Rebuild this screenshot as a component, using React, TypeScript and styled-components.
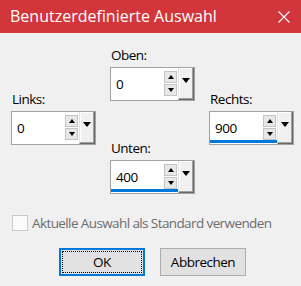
import React from "react";
import styled, { createGlobalStyle } from "styled-components";

const Global = createGlobalStyle`
  html, body { margin: 0; padding: 0; }
  body {
    width: 301px;
    height: 286px;
    overflow: hidden;
    background: #f0f0f0;
    font-family: "Open Sans", "Noto Sans", "Liberation Sans", sans-serif;
    font-size: 13.5px;
    letter-spacing: -0.5px;
    color: #000;
  }
`;

const Window = styled.div`
  width: 301px;
  height: 286px;
  display: flex;
  flex-direction: column;
  background: #f0f0f0;
`;

const TitleBar = styled.div`
  height: 33px;
  flex: none;
  background: #d2353a;
  color: #fff;
  display: flex;
  align-items: center;
  justify-content: space-between;
  padding: 0 11px 0 10px;
  box-sizing: border-box;
`;

const TitleText = styled.span`
  font-size: 16px;
  letter-spacing: 0;
  line-height: 20px;
  margin-top: -1px;
`;

const CloseIcon = styled.svg`
  width: 12px;
  height: 12px;
  display: block;
`;

const Fields = styled.div`
  display: flex;
  align-items: flex-start;
  gap: 14px;
  padding: 12px 0 0 11px;
`;

const Column = styled.div<{ $offset: number }>`
  width: 85px;
  display: flex;
  flex-direction: column;
  gap: 37px;
  padding-top: ${(p) => p.$offset}px;
`;

const Group = styled.div`
  display: flex;
  flex-direction: column;
`;

const Label = styled.label`
  font-size: 13.5px;
  line-height: 20px;
  height: 22px;
  padding-left: 1px;
  color: #000;
`;

const SpinBox = styled.div`
  height: 34px;
  box-sizing: border-box;
  border: 1px solid #a2a2a2;
  background: #fff;
  display: flex;
`;

const Main = styled.div`
  flex: 1;
  display: flex;
  flex-direction: column;
  min-width: 0;
`;

const FieldRow = styled.div`
  flex: 1;
  display: flex;
  align-items: flex-start;
`;

const Value = styled.span`
  flex: 1;
  padding: 6px 0 0 5px;
  line-height: 20px;
  font-size: 13.5px;
  color: #000;
`;

const Spinners = styled.div`
  width: 13px;
  margin: 3px 1px 0 0;
  display: flex;
  flex-direction: column;
  gap: 1px;
`;

const SpinButton = styled.div`
  height: 12px;
  box-sizing: border-box;
  border: 1px solid #c4c4c4;
  background: #e7e7e7;
  display: flex;
  align-items: center;
  justify-content: center;
`;

const Bar = styled.div<{ $active: boolean }>`
  height: 4px;
  margin-bottom: 1px;
  background: ${(p) => (p.$active ? "#0078d7" : "transparent")};
`;

const DropButton = styled.div`
  width: 16px;
  box-sizing: border-box;
  background: #f0f0f0;
  border-left: 1px solid #e3e3e3;
  border-right: 1px solid #696969;
  border-bottom: 1px solid #696969;
  box-shadow: inset -1px -1px 0 #a0a0a0, inset 1px 1px 0 #ffffff;
  display: flex;
  justify-content: center;
  padding-top: 10px;
`;

const Triangle = styled.span<{ $dir: "up" | "down"; $w: number; $h: number }>`
  width: 0;
  height: 0;
  border-left: ${(p) => p.$w / 2}px solid transparent;
  border-right: ${(p) => p.$w / 2}px solid transparent;
  ${(p) =>
    p.$dir === "up"
      ? `border-bottom: ${p.$h}px solid #000;`
      : `border-top: ${p.$h}px solid #000;`}
`;

const CheckRow = styled.div`
  display: flex;
  align-items: center;
  gap: 4px;
  padding: 0 0 0 12px;
  margin-top: 21px;
  height: 16px;
  white-space: nowrap;
`;

const CheckBox = styled.span`
  width: 16px;
  height: 16px;
  flex: none;
  box-sizing: border-box;
  border: 1px solid #c9c9c9;
  background: #fbfbfb;
`;

const CheckText = styled.span`
  color: #6d6d6d;
  font-size: 13.5px;
  letter-spacing: -0.6px;
  line-height: 20px;
`;

const Buttons = styled.div`
  display: flex;
  gap: 15px;
  padding-left: 59px;
  margin-top: 17px;
`;

const Button = styled.button<{ $default?: boolean }>`
  width: 86px;
  height: 28px;
  box-sizing: border-box;
  margin: 0;
  padding: 0;
  font-family: inherit;
  letter-spacing: inherit;
  font-size: 13.5px;
  color: #000;
  background: #e1e1e1;
  border: ${(p) => (p.$default ? "2px solid #0078d7" : "1px solid #adadad")};
  outline: ${(p) => (p.$default ? "1px dotted #000" : "none")};
  outline-offset: -4px;
`;

type SpinProps = { label: string; value: string; active?: boolean };

function Spin({ label, value, active = false }: SpinProps) {
  return (
    <Group>
      <Label>{label}</Label>
      <SpinBox>
        <Main>
          <FieldRow>
            <Value>{value}</Value>
            <Spinners>
              <SpinButton>
                <Triangle $dir="up" $w={7} $h={4} />
              </SpinButton>
              <SpinButton>
                <Triangle $dir="down" $w={7} $h={4} />
              </SpinButton>
            </Spinners>
          </FieldRow>
          <Bar $active={active} />
        </Main>
        <DropButton>
          <Triangle $dir="down" $w={9} $h={5} />
        </DropButton>
      </SpinBox>
    </Group>
  );
}

export default function App() {
  return (
    <>
      <Global />
      <Window>
        <TitleBar>
          <TitleText>Benutzerdefinierte Auswahl</TitleText>
          <CloseIcon viewBox="0 0 12 12">
            <path d="M0.5 0.5 L11.5 11.5 M11.5 0.5 L0.5 11.5" stroke="#fff" strokeWidth="1.1" fill="none" />
          </CloseIcon>
        </TitleBar>
        <Fields>
          <Column $offset={44}>
            <Spin label="Links:" value="0" />
          </Column>
          <Column $offset={0}>
            <Spin label="Oben:" value="0" />
            <Spin label="Unten:" value="400" active />
          </Column>
          <Column $offset={44}>
            <Spin label="Rechts:" value="900" active />
          </Column>
        </Fields>
        <CheckRow>
          <CheckBox />
          <CheckText>Aktuelle Auswahl als Standard verwenden</CheckText>
        </CheckRow>
        <Buttons>
          <Button $default>OK</Button>
          <Button>Abbrechen</Button>
        </Buttons>
      </Window>
    </>
  );
}
